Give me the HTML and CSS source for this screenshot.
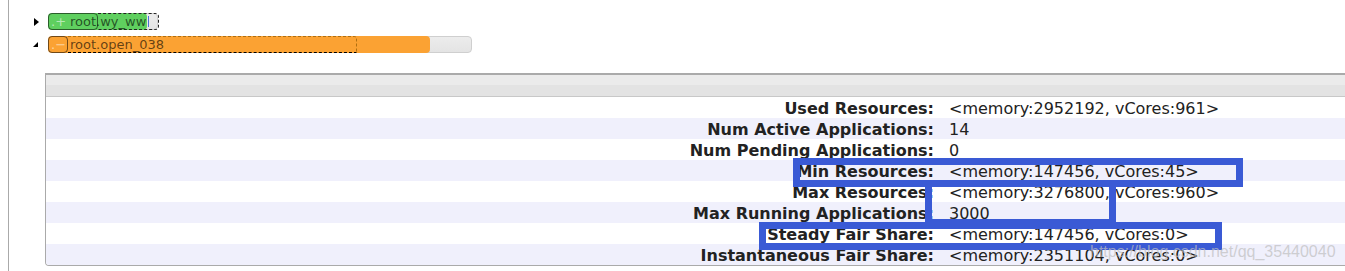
FILE: index.html
```html
<!DOCTYPE html>
<html lang="en">
<head>
    <meta charset="UTF-8">
    <title>Fair Scheduler Queues</title>
    <link rel="stylesheet" href="styles.css">
</head>
<body>
    <div class="page">
        <!-- queue tree -->
        <ul class="tree">
            <li class="node">
                <span class="arrow closed"></span>
                <div class="bar" style="width: 110px;">
                    <span class="used green" style="width: 99px;"></span>
                    <span class="share dark" style="left: 49px; width: 60px;"></span>
                    <span class="icon" style="width: 50px;"></span>
                    <span class="sign">.+</span>
                    <span class="name">root.wy_ww</span>
                    <span class="caret"></span>
                </div>
            </li>
            <li class="node">
                <span class="arrow open"></span>
                <div class="bar" style="width: 424px;">
                    <span class="used orange" style="width: 382px;"></span>
                    <span class="share brown" style="left: 19px; width: 288px;"></span>
                    <span class="icon" style="width: 20px;"></span>
                    <span class="sign">.&minus;</span>
                    <span class="name">root.open_038</span>
                </div>
            </li>
        </ul>

        <!-- queue details -->
        <div class="info">
            <div class="info-head"></div>
            <div class="row"><span class="key">Used Resources:</span><span class="val">&lt;memory:2952192, vCores:961&gt;</span></div>
            <div class="row odd"><span class="key">Num Active Applications:</span><span class="val">14</span></div>
            <div class="row"><span class="key">Num Pending Applications:</span><span class="val">0</span></div>
            <div class="row odd"><span class="key">Min Resources:</span><span class="val">&lt;memory:147456, vCores:45&gt;</span></div>
            <div class="row"><span class="key">Max Resources:</span><span class="val">&lt;memory:3276800, vCores:960&gt;</span></div>
            <div class="row odd"><span class="key">Max Running Applications:</span><span class="val">3000</span></div>
            <div class="row"><span class="key">Steady Fair Share:</span><span class="val">&lt;memory:147456, vCores:0&gt;</span></div>
            <div class="row odd"><span class="key">Instantaneous Fair Share:</span><span class="val">&lt;memory:2351104, vCores:0&gt;</span></div>
        </div>
    </div>

    <!-- highlight marks drawn over the screenshot -->
    <div class="mark" style="left: 793px; top: 158px; width: 450px; height: 29px;"></div>
    <div class="mark" style="left: 925px; top: 180px; width: 191px; height: 46px;"></div>
    <div class="mark" style="left: 759px; top: 222px; width: 463px; height: 28px;"></div>
    <div class="watermark">https://blog.csdn.net/qq_35440040</div>
</body>
</html>
```

FILE: styles.css
```css
html, body {
    margin: 0;
    padding: 0;
    overflow: hidden;
}
body {
    position: relative;
    background-color: #fff;
    font-family: "DejaVu Sans", Verdana, sans-serif;
    color: #222;
}
.page {
    margin-left: 8px;
    border-left: 1px solid #aaa;
    min-height: 271px;
    padding-top: 13px;
    box-sizing: border-box;
}
/* Tree */
.tree {
    list-style: none;
    margin: 0;
    padding: 0 0 0 25px;
    display: flex;
    flex-direction: column;
    gap: 6px;
}
.node {
    display: flex;
    align-items: center;
    height: 17px;
}
.arrow {
    width: 0;
    height: 0;
    margin-right: 9px;
}
.arrow.closed {
    border-left: 5px solid #000;
    border-top: 4px solid transparent;
    border-bottom: 4px solid transparent;
    margin-right: 9px;
}
.arrow.open {
    border-bottom: 5px solid #000;
    border-left: 5px solid transparent;
    margin-left: -1px;
    margin-right: 10px;
}
.bar {
    position: relative;
    height: 17px;
    box-sizing: border-box;
    background: linear-gradient(#ececec, #e4e4e4);
    border: 1px solid #cfcfcf;
    border-radius: 4px;
    font-size: 13px;
    line-height: 15px;
    white-space: nowrap;
}
.used {
    position: absolute;
    left: -1px;
    top: -1px;
    bottom: -1px;
    border-radius: 4px;
}
.used.green {
    background-color: #5fcf5f;
}
.used.orange {
    background-color: #fba233;
}
.share {
    position: absolute;
    top: -1px;
    bottom: -1px;
    border: 1px dashed #000;
    border-left: none;
    border-radius: 0 4px 4px 0;
}
.share.dark {
    border-color: #222;
}
.share.brown {
    border-color: #b06f10;
    border-bottom-color: #000;
    border-radius: 0 3px 0 0;
}
.icon {
    position: absolute;
    left: -1px;
    top: -1px;
    bottom: -1px;
    border: 1px solid rgba(0, 0, 0, 0.55);
    border-radius: 4px;
    box-sizing: border-box;
}
.sign {
    position: absolute;
    left: 2px;
    top: 0;
    color: rgba(255, 255, 255, 0.55);
    font-size: 13px;
}
.name {
    position: relative;
    display: block;
    padding-left: 21px;
    color: rgba(0, 0, 0, 0.62);
}
.caret {
    position: absolute;
    left: 99px;
    top: 2px;
    width: 1px;
    height: 11px;
    background-color: #4a6fd8;
}
/* Info table */
.info {
    margin: 20px 0 0 36px;
    width: 1400px;
    border: 1px solid #aaa;
    border-top-width: 2px;
    border-radius: 0 0 0 4px;
    overflow: hidden;
}
.info-head {
    height: 22px;
    background: linear-gradient(#ebebeb 50%, #e3e3e3 50%);
    border-bottom: 1px solid #c8c8c8;
    box-sizing: border-box;
}
.row {
    display: grid;
    grid-template-columns: 889px 1fr;
    height: 21px;
    padding-top: 3px;
    box-sizing: border-box;
    font-size: 16px;
    line-height: 18px;
    background-color: #fff;
}
.row.odd {
    background-color: #f0f0fc;
}
.key {
    text-align: right;
    font-weight: bold;
    padding-right: 1px;
}
.val {
    padding-left: 14px;
}
/* Annotations */
.mark {
    position: absolute;
    border: 7px solid #3a5ad5;
    box-sizing: border-box;
}
.watermark {
    position: absolute;
    left: 1090px;
    top: 243px;
    font-family: "Liberation Sans", Arial, sans-serif;
    font-size: 16px;
    color: rgba(190, 190, 190, 0.7);
}
```
